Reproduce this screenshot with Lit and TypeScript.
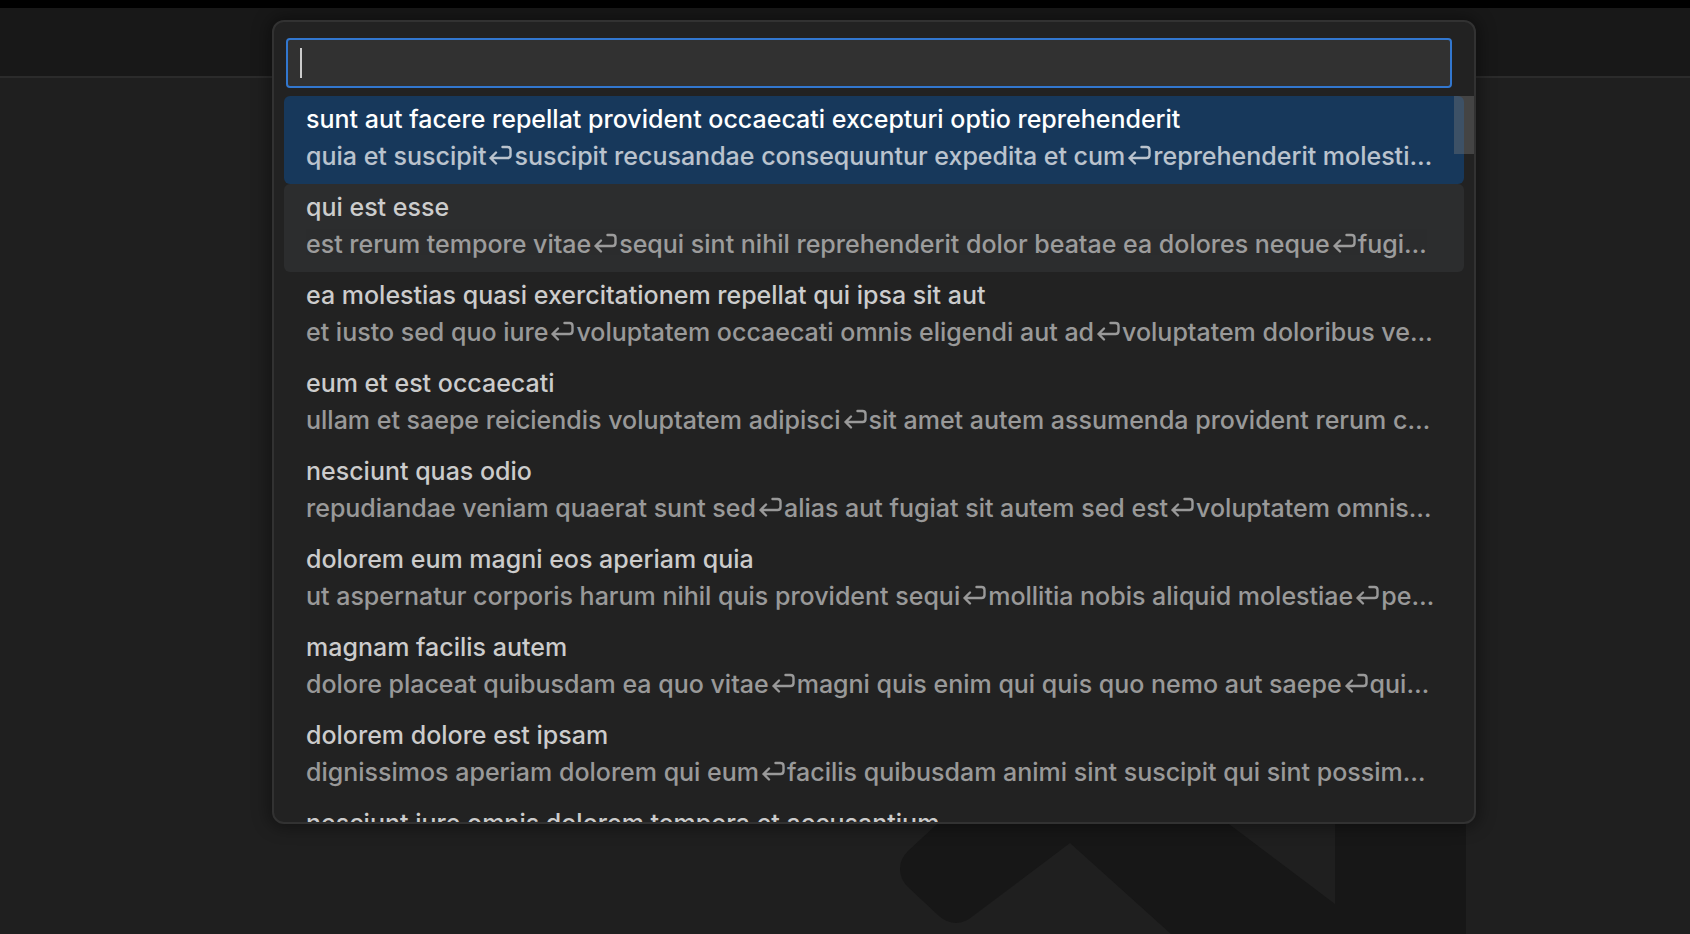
import { LitElement, html, css } from "lit";
import { customElement, property, state } from "lit/decorators.js";
import { classMap } from "lit/directives/class-map.js";

interface Post {
  title: string;
  excerpt: string[];
}

const POSTS: Post[] = [
  {
    title: "sunt aut facere repellat provident occaecati excepturi optio reprehenderit",
    excerpt: ["quia et suscipit", "suscipit recusandae consequuntur expedita et cum", "reprehenderit molesti…"],
  },
  {
    title: "qui est esse",
    excerpt: ["est rerum tempore vitae", "sequi sint nihil reprehenderit dolor beatae ea dolores neque", "fugi…"],
  },
  {
    title: "ea molestias quasi exercitationem repellat qui ipsa sit aut",
    excerpt: ["et iusto sed quo iure", "voluptatem occaecati omnis eligendi aut ad", "voluptatem doloribus ve…"],
  },
  {
    title: "eum et est occaecati",
    excerpt: ["ullam et saepe reiciendis voluptatem adipisci", "sit amet autem assumenda provident rerum c…"],
  },
  {
    title: "nesciunt quas odio",
    excerpt: ["repudiandae veniam quaerat sunt sed", "alias aut fugiat sit autem sed est", "voluptatem omnis…"],
  },
  {
    title: "dolorem eum magni eos aperiam quia",
    excerpt: ["ut aspernatur corporis harum nihil quis provident sequi", "mollitia nobis aliquid molestiae", "pe…"],
  },
  {
    title: "magnam facilis autem",
    excerpt: ["dolore placeat quibusdam ea quo vitae", "magni quis enim qui quis quo nemo aut saepe", "qui…"],
  },
  {
    title: "dolorem dolore est ipsam",
    excerpt: ["dignissimos aperiam dolorem qui eum", "facilis quibusdam animi sint suscipit qui sint possim…"],
  },
  {
    title: "nesciunt iure omnis dolorem tempora et accusantium",
    excerpt: [],
  },
];

@customElement("quick-pick-row")
export class QuickPickRow extends LitElement {
  @property({ attribute: false }) post!: Post;

  static styles = css`
    :host {
      display: block;
      box-sizing: border-box;
      height: 88px;
      padding: 5px 22px 0 22px;
      border-radius: 6px;
      color: #cccccc;
      cursor: pointer;
    }
    :host([hovered]) {
      background: #2c2d2e;
    }
    :host([selected]) {
      background: #17385b;
      color: #ffffff;
    }
    .line {
      overflow: hidden;
      white-space: nowrap;
      text-overflow: ellipsis;
      line-height: 37px;
    }
    .detail {
      opacity: 0.7;
    }
    .return {
      width: 28px;
      height: 22px;
      vertical-align: -1px;
      fill: none;
      stroke: currentColor;
      stroke-width: 2.4;
      stroke-linecap: round;
      stroke-linejoin: round;
    }
  `;

  render() {
    const glyph = html`<svg class="return" viewBox="-1 0 28 22" aria-hidden="true">
      <path d="M15.500 3H20.500Q23.500 3 23.500 6V11Q23.500 14 20.500 14H3.500M9 8.500L3.500 14L9 19.500" />
    </svg>`;
    return html`
      <div class="line">${this.post.title}</div>
      <div class="line detail">${this.post.excerpt.map((part, i) => html`${i ? glyph : ""}${part}`)}</div>
    `;
  }
}

@customElement("quick-pick")
export class QuickPick extends LitElement {
  @state() private selected = 0;
  @state() private hovered = 1;

  static styles = css`
    :host {
      display: block;
      box-sizing: border-box;
      border: 2px solid #323232;
      border-radius: 12px;
      background: #222222;
      box-shadow: 0 0 16px 4px rgba(0, 0, 0, 0.36);
      overflow: hidden;
    }
    .header {
      position: relative;
      padding: 16px 22px 8px 12px;
    }
    .filter {
      display: block;
      box-sizing: border-box;
      width: 100%;
      height: 50px;
      padding: 0 12px;
      border: 2px solid #3277cf;
      border-radius: 4px;
      outline: none;
      background: #313131;
      color: #cccccc;
      font: inherit;
      caret-color: transparent;
    }
    .caret {
      position: absolute;
      left: 26px;
      top: 26px;
      width: 2px;
      height: 30px;
      background: #cccccc;
    }
    .body {
      position: relative;
    }
    .list {
      max-height: 726px;
      margin: 0;
      padding: 0 10px;
      overflow: hidden;
    }
    .thumb {
      position: absolute;
      top: 0;
      right: 0;
      width: 20px;
      height: 58px;
      background: rgba(121, 121, 121, 0.4);
    }
  `;

  render() {
    return html`
      <div class="header">
        <input class="filter" type="text" aria-label="Filter posts" spellcheck="false" />
        <span class="caret"></span>
      </div>
      <div class="body">
        <div class="list" role="listbox" aria-label="Posts">
          ${POSTS.map(
            (post, i) => html`<quick-pick-row
              role="option"
              aria-selected=${i === this.selected ? "true" : "false"}
              .post=${post}
              ?selected=${i === this.selected}
              ?hovered=${i === this.hovered}
              @click=${() => (this.selected = i)}
              @mouseenter=${() => (this.hovered = i)}
            ></quick-pick-row>`
          )}
        </div>
        <div class="thumb"></div>
      </div>
    `;
  }
}

@customElement("app-root")
export class AppRoot extends LitElement {
  @state() private open = true;

  static styles = css`
    :host {
      display: flex;
      flex-direction: column;
      position: relative;
      height: 100vh;
      overflow: hidden;
      background: #1f1f1f;
      font-family: Inter, "Liberation Sans", sans-serif;
      font-size: 25px;
      font-weight: 500;
    }
    .bezel {
      flex: none;
      height: 8px;
      background: #000000;
    }
    .titlebar {
      flex: none;
      height: 68px;
      border-bottom: 2px solid #2b2b2b;
      background: #181818;
    }
    .editor {
      flex: 1;
      position: relative;
      min-height: 0;
    }
    .watermark {
      position: absolute;
      left: 900px;
      top: 722px;
      width: 566px;
      height: 134px;
      fill: #171717;
    }
    .picker {
      position: absolute;
      top: 20px;
      left: 272px;
      right: 214px;
    }
    .hidden {
      display: none;
    }
  `;

  render() {
    return html`
      <div class="bezel"></div>
      <header class="titlebar"></header>
      <main class="editor">
        <svg class="watermark" viewBox="900 800 566 134" aria-hidden="true">
          <path
            d="M963 800L908 851Q900 859 900 869Q900 880 909 888L939 916Q947 923 956 923Q965 923 973 916L1070 843L1171 934H1466V800H1335V904L1197 800Z"
          />
        </svg>
      </main>
      <quick-pick class=${classMap({ picker: true, hidden: !this.open })}></quick-pick>
    `;
  }
}
